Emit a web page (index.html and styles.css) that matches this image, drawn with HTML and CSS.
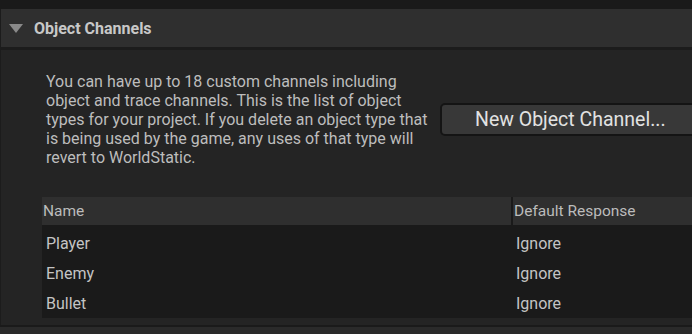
FILE: index.html
```html
<!DOCTYPE html>
<html lang="en">
<head>
    <meta charset="UTF-8">
    <title>Object Channels</title>
    <link rel="stylesheet" href="styles.css">
</head>
<body>
    <div class="topstrip"></div>
    <div class="section">
        <div class="section-header">
            <svg class="arrow" width="14" height="9" viewBox="0 0 14 9"><polygon points="0,0 14,0 7,9" fill="#8a8a8a"/></svg>
            <span>Object Channels</span>
        </div>
        <div class="section-body">
            <div class="intro">
                <p class="desc">You can have up to 18 custom channels including object and trace channels. This is the list of object types for your project. If you delete an object type that is being used by the game, any uses of that type will revert to WorldStatic.</p>
                <button class="new-btn">New Object Channel...</button>
            </div>
            <div class="table">
                <div class="thead">
                    <div class="col-name">Name</div>
                    <div class="col-resp">Default Response</div>
                </div>
                <div class="rows">
                    <div class="row"><div class="col-name">Player</div><div class="col-resp">Ignore</div></div>
                    <div class="row"><div class="col-name">Enemy</div><div class="col-resp">Ignore</div></div>
                    <div class="row"><div class="col-name">Bullet</div><div class="col-resp">Ignore</div></div>
                </div>
            </div>
        </div>
    </div>
    <div class="bottomstrip"></div>
</body>
</html>
```
FILE: styles.css
```css
body {
    margin: 0;
    background: #1a1a1a;
    font-family: Roboto, "Liberation Sans", sans-serif;
    color: #c0c0c0;
    width: 692px;
    height: 334px;
    overflow: hidden;
}
.topstrip {
    height: 9px;
    background: #1a1a1a;
}
.section {
    border-left: 1px solid #1c1c1c;
}
.section-header {
    display: flex;
    align-items: center;
    padding-left: 8px;
    box-sizing: border-box;
    height: 41px;
    background: #2f2f2f;
    border-bottom: 3px solid #1c1c1c;
    font-weight: bold;
    font-size: 16px;
    color: #c8c8c8;
}
.arrow {
    margin-right: 11px;
    margin-top: 1px;
}
.section-body {
    background: #242424;
    padding: 14px 0 0 41px;
    height: 275px;
    box-sizing: border-box;
}
.intro {
    display: flex;
    align-items: center;
    height: 106px;
}
.desc {
    margin: 4px 0 0 4px;
    width: 390px;
    flex-shrink: 0;
    font-size: 16px;
    line-height: 19px;
    color: #bdbdbd;
}
.new-btn {
    margin-left: 4px;
    margin-top: 4px;
    width: 270px;
    height: 33px;
    flex-shrink: 0;
    background: #383838;
    border: 2px solid #141414;
    border-radius: 5px;
    color: #e2e2e2;
    font-family: Roboto, "Liberation Sans", sans-serif;
    font-size: 19.5px;
    text-align: left;
    padding-left: 33px;
}
.table {
    margin-top: 27px;
    background: #1a1a1a;
}
.thead {
    display: flex;
    background: #2f2f2f;
    height: 28px;
    align-items: center;
    font-size: 15.5px;
    color: #bcbcbc;
}
.thead .col-name {
    padding-left: 1px;
}
.thead .col-resp {
    border-left: 2px solid #1a1a1a;
    height: 28px;
    line-height: 28px;
    padding-left: 1px;
}
.col-name {
    width: 469px;
    box-sizing: border-box;
}
.rows {
    padding-top: 3px;
}
.row {
    display: flex;
    height: 30px;
    align-items: center;
    font-size: 16px;
    color: #c4c4c4;
}
.row .col-name {
    padding-left: 4px;
}
.row .col-resp {
    padding-left: 5px;
}
.bottomstrip {
    border-top: 2px solid #1a1a1a;
    height: 10px;
    background: #2a2a2a;
}
```
